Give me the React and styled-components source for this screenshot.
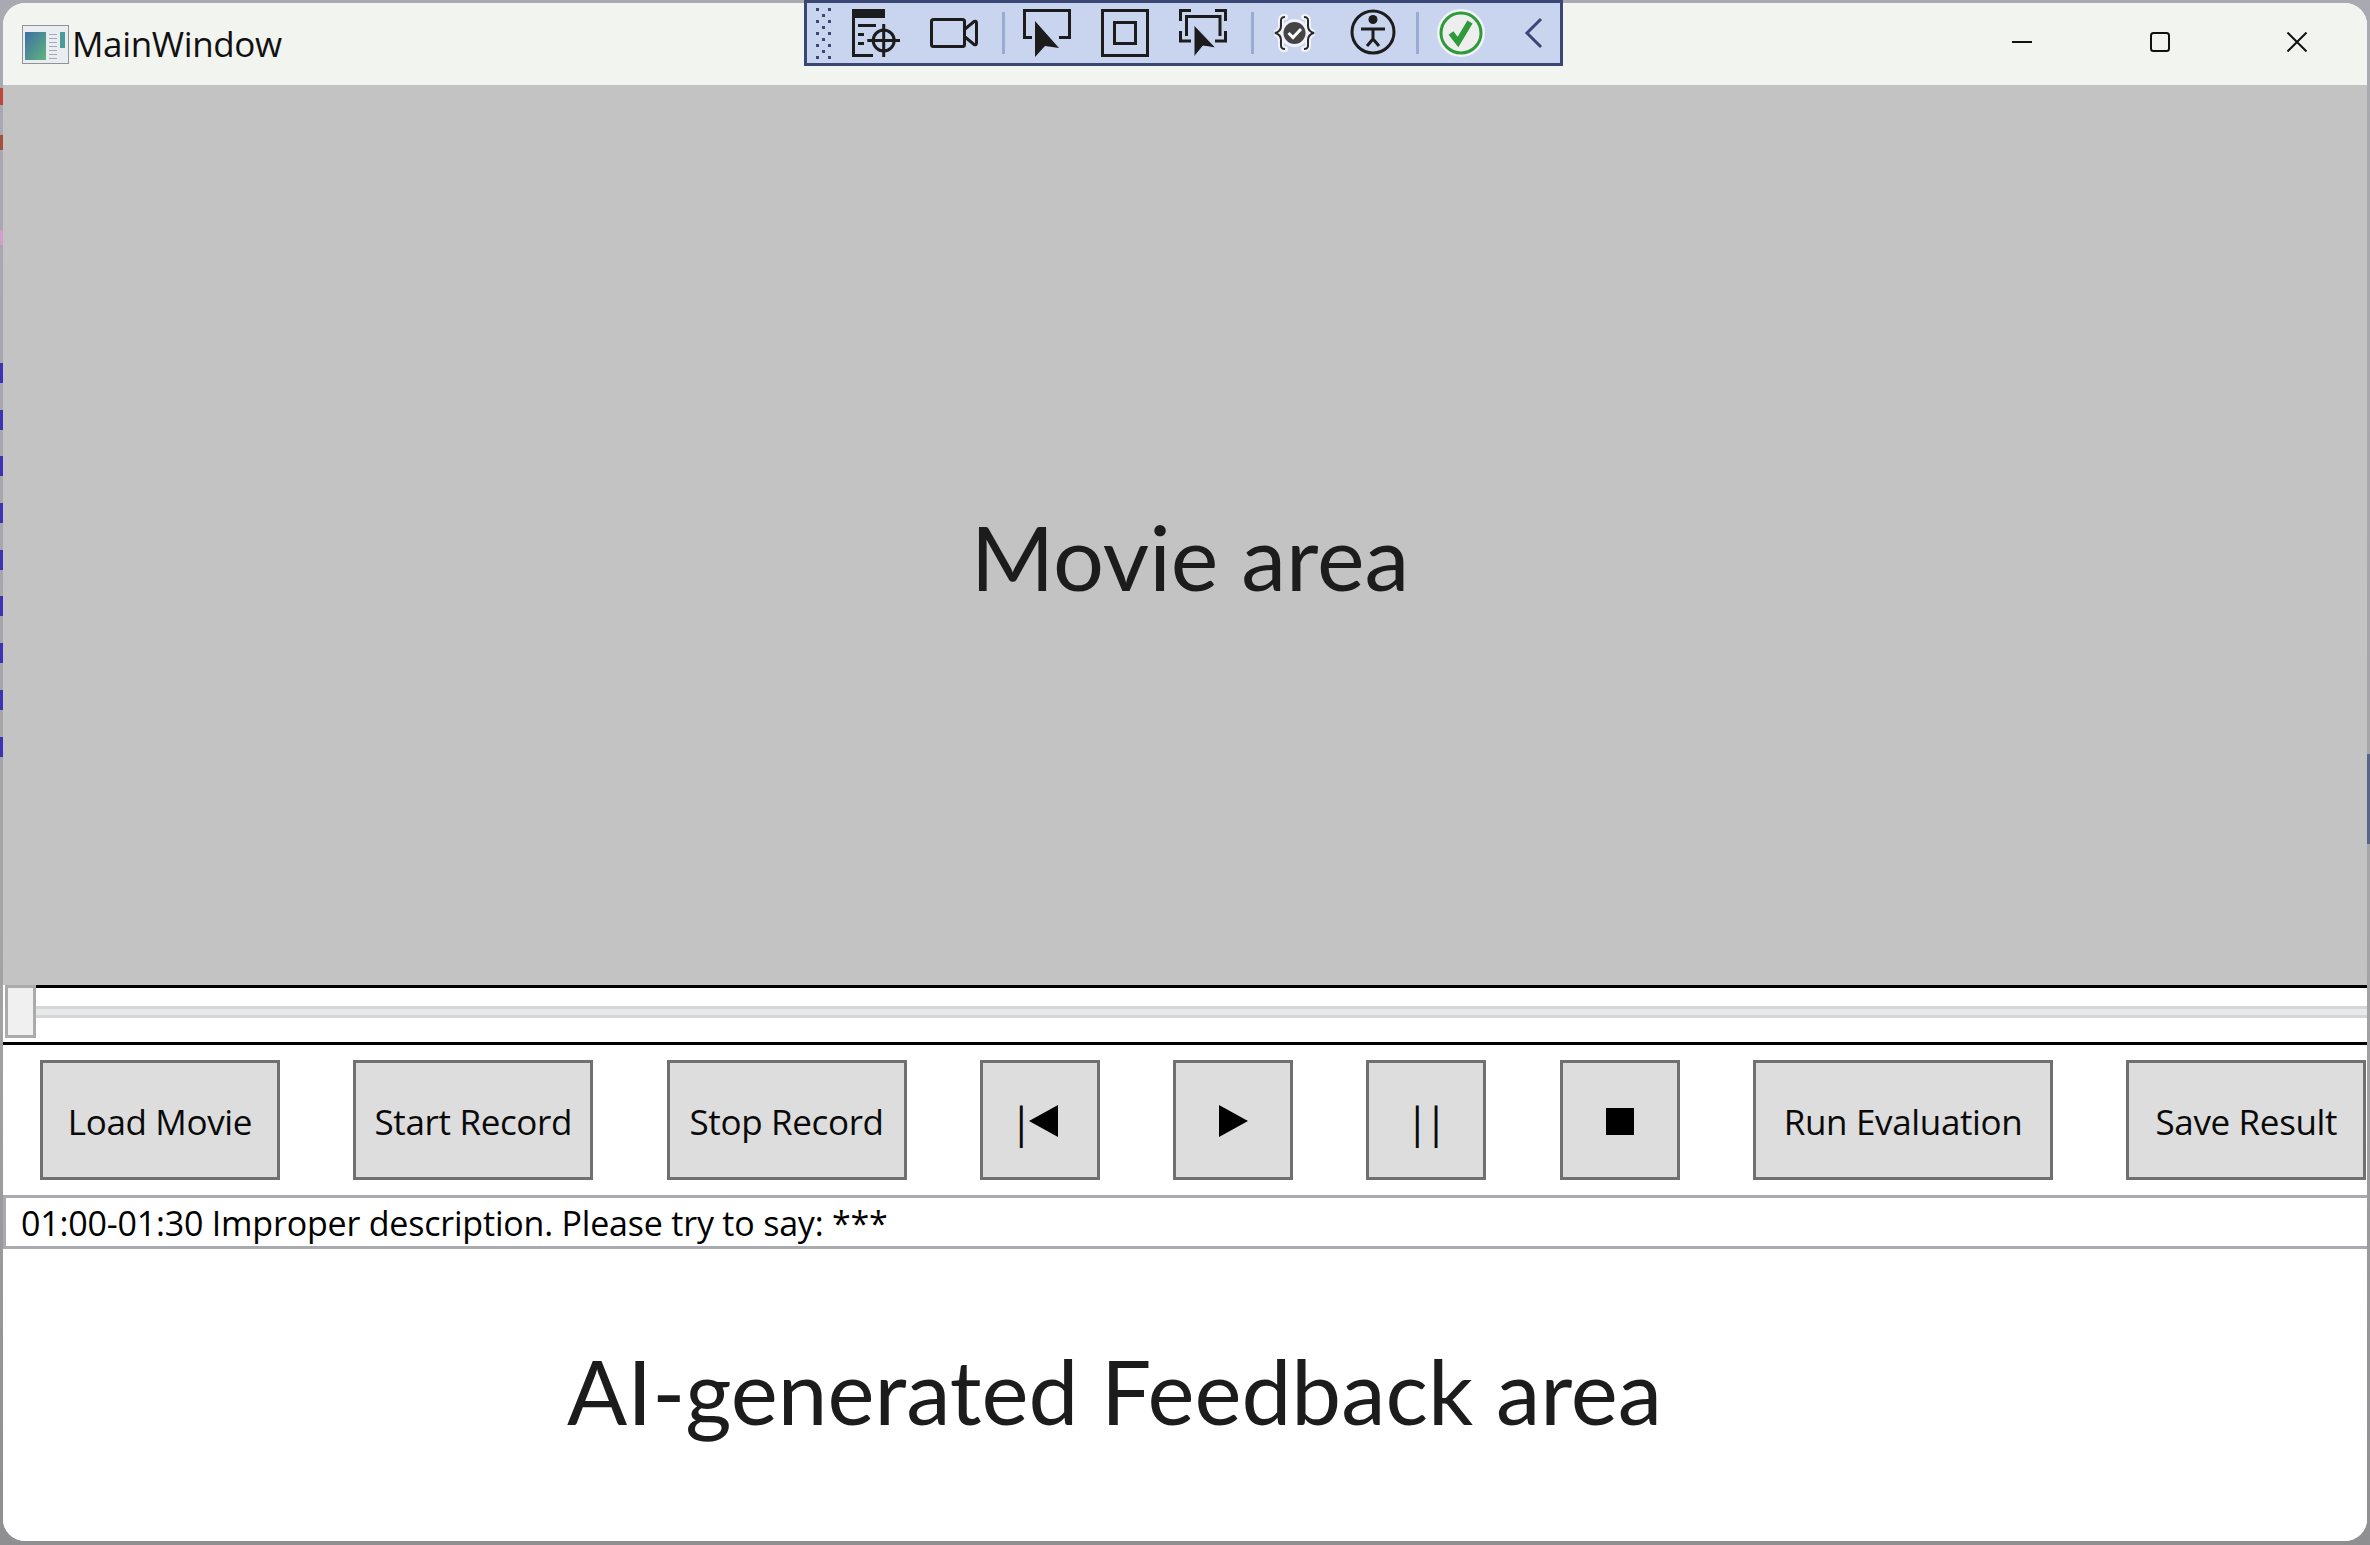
import React from "react";
import styled, { createGlobalStyle } from "styled-components";

const Global = createGlobalStyle`
  html, body { margin: 0; padding: 0; background: #9b9ba0; overflow: hidden; }
  #root { width: 2370px; height: 1545px; }
`;

const Desktop = styled.div`
  position: relative;
  width: 2370px;
  height: 1545px;
  padding: 3px 3px 4px 3px;
  box-sizing: border-box;
  background: linear-gradient(#a9a9b2 0, #a5a5a7 60%, #8f8f92 100%);
  &::before {
    content: "";
    position: absolute;
    left: 0;
    top: 88px;
    width: 3px;
    height: 670px;
    background:
      linear-gradient(#c0453a 0 17px, transparent 17px 47px, #a0523a 47px 62px, transparent 62px 142px, #d0a0c8 142px 157px, transparent 157px) left top / 3px 200px no-repeat,
      repeating-linear-gradient(#3b32b4 0 20px, transparent 20px 46.7px) left 275px / 3px 395px no-repeat;
  }
  &::after {
    content: "";
    position: absolute;
    right: 0;
    top: 754px;
    width: 3px;
    height: 90px;
    background: #5a6488;
  }
`;

const Window = styled.div`
  position: relative;
  z-index: 1;
  height: 100%;
  display: flex;
  flex-direction: column;
  border-radius: 22px;
  overflow: hidden;
  background: #fff;
  font-family: "Open Sans", "Noto Sans", sans-serif;
  color: #000;
`;

const TitleBar = styled.div`
  flex: 0 0 82px;
  display: flex;
  align-items: center;
  background: #f2f4f0;
  padding-left: 19px;
  gap: 3px;
`;

const TitleText = styled.span`
  font-size: 35px;
  letter-spacing: -0.37px;
  color: #111;
  position: relative;
  top: -1px;
`;

const Controls = styled.div`
  margin-left: auto;
  display: flex;
  align-items: center;
  padding-right: 60px;
  gap: 117.5px;
  height: 100%;
  padding-bottom: 4px;
  box-sizing: border-box;
`;

const Toolbar = styled.div`
  position: absolute;
  z-index: 2;
  left: 804px;
  top: 0;
  width: 759px;
  height: 66px;
  box-sizing: border-box;
  border: 3px solid #3a4674;
  background: #c9d4ef;
`;

const ToolIcon = styled.svg`
  position: absolute;
  left: ${(p) => p.$x - 807}px;
  top: ${(p) => p.$y - 3}px;
  display: block;
`;

const Sep = styled.div`
  position: absolute;
  left: ${(p) => p.$x - 807}px;
  top: 9px;
  width: 3px;
  height: 42px;
  background: #9aaad2;
`;

const MoviePane = styled.div`
  flex: 0 0 900px;
  background: #c3c3c3;
  display: flex;
  align-items: center;
  justify-content: center;
  padding-left: 10px;
  padding-top: 42px;
  box-sizing: border-box;
`;

const BigLabel = styled.div`
  font-family: "Lato", "Open Sans", sans-serif;
  font-size: ${(p) => p.$size}px;
  color: #1c1c1c;
  white-space: nowrap;
`;

const SliderRow = styled.div`
  position: relative;
  flex: 0 0 60px;
  box-sizing: border-box;
  background: #fff;
  border-bottom: 3px solid #000;
  padding-left: 33px;
  display: flex;
  flex-direction: column;
`;

const SliderTopLine = styled.div`
  height: 3px;
  background: #000;
`;

const SliderTrack = styled.div`
  margin-top: 18px;
  height: 12px;
  box-sizing: border-box;
  border-top: 3px solid #d6d6d6;
  border-bottom: 3px solid #d6d6d6;
  background: #e7eaea;
`;

const Thumb = styled.div`
  position: absolute;
  left: 2px;
  top: 0;
  width: 31px;
  height: 53px;
  box-sizing: border-box;
  border: 3px solid #ababab;
  background: #f0f0f0;
`;

const ButtonRow = styled.div`
  flex: 0 0 150px;
  box-sizing: border-box;
  padding: 15px 0 15px 37px;
  display: flex;
  gap: 73.3px;
  background: #fff;
`;

const Btn = styled.div`
  flex: 0 0 ${(p) => p.$w}px;
  box-sizing: border-box;
  border: 3px solid #707070;
  background: #dddddd;
  display: flex;
  align-items: center;
  justify-content: center;
  font-size: 35px;
  letter-spacing: -0.35px;
  padding-top: 2px;
  color: #0a0a0a;
  white-space: nowrap;
`;

const PrevBtn = styled(Btn)`
  font-size: 42px;
  padding-right: 12px;
`;

const PauseBtn = styled(Btn)`
  font-size: 42px;
  word-spacing: -14.5px;
`;

const Glyph = styled.svg`
  display: block;
`;

const PrevGlyph = styled.svg`
  display: block;
  margin-left: -3.5px;
`;

const Status = styled.div`
  flex: 0 0 54px;
  box-sizing: border-box;
  border: 3px solid #a9a9b0;
  border-right: none;
  padding: 2px 0 0 15px;
  display: flex;
  align-items: center;
  font-size: 34px;
  letter-spacing: -0.2px;
  background: #fff;
  white-space: nowrap;
`;

const FeedbackPane = styled.div`
  flex: 1;
  background: #fff;
  display: flex;
  align-items: center;
  padding-left: 564px;
  padding-bottom: 10px;
`;

const Ink = "#1c1c1c";

function AppIcon() {
  return (
    <svg width="47" height="39" viewBox="0 0 47 39" style={{ display: "block", flex: "none" }}>
      <defs>
        <linearGradient id="ai" x1="0" y1="0" x2="1" y2="1">
          <stop offset="0" stopColor="#3f6ea8" />
          <stop offset="1" stopColor="#5fb57a" />
        </linearGradient>
      </defs>
      <rect x="0.5" y="0.5" width="46" height="38" fill="#e9edf1" stroke="#8f9398" />
      <rect x="3" y="7" width="21" height="28" fill="url(#ai)" />
      <rect x="38" y="7" width="5" height="16" fill="#4a9a9a" />
      {[9, 13, 17, 21, 25, 29, 33].map((y) => (
        <rect key={y} x="27" y={y} width="8" height="1" fill="#a6abb0" />
      ))}
    </svg>
  );
}

function Toolbox() {
  const dots = [];
  for (let i = 0; i < 5; i++) {
    dots.push(<rect key={"a" + i} x="0" y={i * 12} width="3" height="3" fill="#3a4674" />);
    dots.push(<rect key={"b" + i} x="12" y={i * 12} width="3" height="3" fill="#3a4674" />);
    if (i < 4) dots.push(<rect key={"c" + i} x="6" y={i * 12 + 6} width="3" height="3" fill="#3a4674" />);
  }
  return (
    <Toolbar>
      <ToolIcon $x={816} $y={8} width="15" height="51" viewBox="0 0 15 51">{dots}</ToolIcon>

      <ToolIcon $x={852} $y={9} width="48" height="48" viewBox="0 0 48 48" fill="none" stroke={Ink} strokeWidth="3">
        <rect x="0" y="0" width="33" height="9" fill={Ink} stroke="none" />
        <path d="M1.5 9V46.5H21M6 16.5H24M6 25.5H12M6 34.5H12" />
        <circle cx="31.7" cy="31.5" r="10.5" />
        <path d="M31.7 15V48M15.3 31.5H48" />
      </ToolIcon>

      <ToolIcon $x={930} $y={18} width="48" height="30" viewBox="0 0 48 30" fill="none" stroke={Ink} strokeWidth="3">
        <rect x="1.5" y="1.5" width="33" height="27" rx="2" />
        <path d="M35 11L44 3.5Q46.5 2.5 46.5 5V25Q46.5 27.5 44 26.5L35 19" />
      </ToolIcon>

      <Sep $x={1002} />

      <ToolIcon $x={1023} $y={9} width="48" height="48" viewBox="0 0 48 48" fill="none" stroke={Ink} strokeWidth="3">
        <path d="M9 28.5H1.5V1.5H46.5V28.5H36" />
        <path d="M12 12L36 39L22 37L12 48Z" fill={Ink} stroke="none" />
      </ToolIcon>

      <ToolIcon $x={1101} $y={9} width="48" height="48" viewBox="0 0 48 48" fill="none" stroke={Ink} strokeWidth="3">
        <rect x="1.5" y="1.5" width="45" height="45" />
        <rect x="13.5" y="13.5" width="21" height="21" />
      </ToolIcon>

      <ToolIcon $x={1179} $y={9} width="48" height="48" viewBox="0 0 48 48" fill="none" stroke={Ink} strokeWidth="3">
        <path d="M1.5 12V1.5H12M36 1.5H46.5V12M46.5 22V32H36M12 32H1.5V22" />
        <path d="M7.5 27V7.5H41V27" />
        <path d="M15 16L37 39L24 37L15 48Z" fill={Ink} stroke="#c9d4ef" strokeWidth="1" />
      </ToolIcon>

      <Sep $x={1251} />

      <ToolIcon $x={1272} $y={14} width="45" height="38" viewBox="0 0 45 38" fill="none">
        <path d="M13 3C8 3 9 6 9 12C9 16 7 18 3 19C7 20 9 22 9 26C9 32 8 35 13 35M32 3C37 3 36 6 36 12C36 16 38 18 42 19C38 20 36 22 36 26C36 32 37 35 32 35" stroke="#f1f3f8" strokeWidth="6" strokeLinecap="round" />
        <circle cx="22.5" cy="19" r="14" fill="#f1f3f8" />
        <path d="M13 3C8 3 9 6 9 12C9 16 7 18 3 19C7 20 9 22 9 26C9 32 8 35 13 35M32 3C37 3 36 6 36 12C36 16 38 18 42 19C38 20 36 22 36 26C36 32 37 35 32 35" stroke="#2a2a2a" strokeWidth="2" />
        <circle cx="22.5" cy="19" r="11" fill="#444" />
        <path d="M16.5 19L21 23.5L29 15" stroke="#fff" strokeWidth="3" />
      </ToolIcon>

      <ToolIcon $x={1350} $y={9} width="46" height="46" viewBox="0 0 46 46" fill="none" stroke={Ink} strokeWidth="3">
        <circle cx="23" cy="23" r="21" />
        <circle cx="23" cy="10.5" r="4.5" fill={Ink} stroke="none" />
        <path d="M11 20H35M23 20V30M23 30L17 37M23 30L29 37" />
      </ToolIcon>

      <Sep $x={1416} />

      <ToolIcon $x={1437} $y={9} width="48" height="48" viewBox="0 0 48 48" fill="none">
        <circle cx="24" cy="24" r="24" fill="#f1f3f5" />
        <circle cx="24" cy="24" r="20" fill="#eeeeee" stroke="#2e9b3a" strokeWidth="3" />
        <path d="M14 24L21 33L33 13" stroke="#2e9b3a" strokeWidth="6" />
      </ToolIcon>

      <ToolIcon $x={1524} $y={17} width="19" height="32" viewBox="0 0 19 32" fill="none" stroke="#3a4674" strokeWidth="3">
        <path d="M17 2L3 16L17 30" />
      </ToolIcon>
    </Toolbar>
  );
}

export default function App() {
  return (
    <>
      <Global />
      <Desktop>
        <Toolbox />
        <Window>
          <TitleBar>
            <AppIcon />
            <TitleText>MainWindow</TitleText>
            <Controls>
              <Glyph width="20" height="20" viewBox="0 0 20 20" fill="none" stroke="#111" strokeWidth="2">
                <path d="M0 10H20" />
              </Glyph>
              <Glyph width="20" height="20" viewBox="0 0 20 20" fill="none" stroke="#111" strokeWidth="2">
                <rect x="1" y="1" width="18" height="18" rx="2.5" />
              </Glyph>
              <Glyph width="20" height="20" viewBox="0 0 20 20" fill="none" stroke="#111" strokeWidth="2">
                <path d="M0.5 0.5L19.5 19.5M19.5 0.5L0.5 19.5" />
              </Glyph>
            </Controls>
          </TitleBar>
          <MoviePane>
            <BigLabel $size={90}>Movie area</BigLabel>
          </MoviePane>
          <SliderRow>
            <SliderTopLine />
            <SliderTrack />
            <Thumb />
          </SliderRow>
          <ButtonRow>
            <Btn $w={240}>Load Movie</Btn>
            <Btn $w={240}>Start Record</Btn>
            <Btn $w={240}>Stop Record</Btn>
            <PrevBtn $w={120}>
              |
              <PrevGlyph width="29" height="32" viewBox="0 0 29 32"><path d="M29 0V32L0 16Z" fill="#000" /></PrevGlyph>
            </PrevBtn>
            <Btn $w={120}>
              <Glyph width="29" height="32" viewBox="0 0 29 32"><path d="M0 0V32L29 16Z" fill="#000" /></Glyph>
            </Btn>
            <PauseBtn $w={120}>| |</PauseBtn>
            <Btn $w={120}>
              <Glyph width="28" height="27" viewBox="0 0 28 27"><rect width="28" height="27" fill="#000" /></Glyph>
            </Btn>
            <Btn $w={300}>Run Evaluation</Btn>
            <Btn $w={240}>Save Result</Btn>
          </ButtonRow>
          <Status>01:00-01:30 Improper description. Please try to say: ***</Status>
          <FeedbackPane>
            <BigLabel $size={89}>AI-generated Feedback area</BigLabel>
          </FeedbackPane>
        </Window>
      </Desktop>
    </>
  );
}
